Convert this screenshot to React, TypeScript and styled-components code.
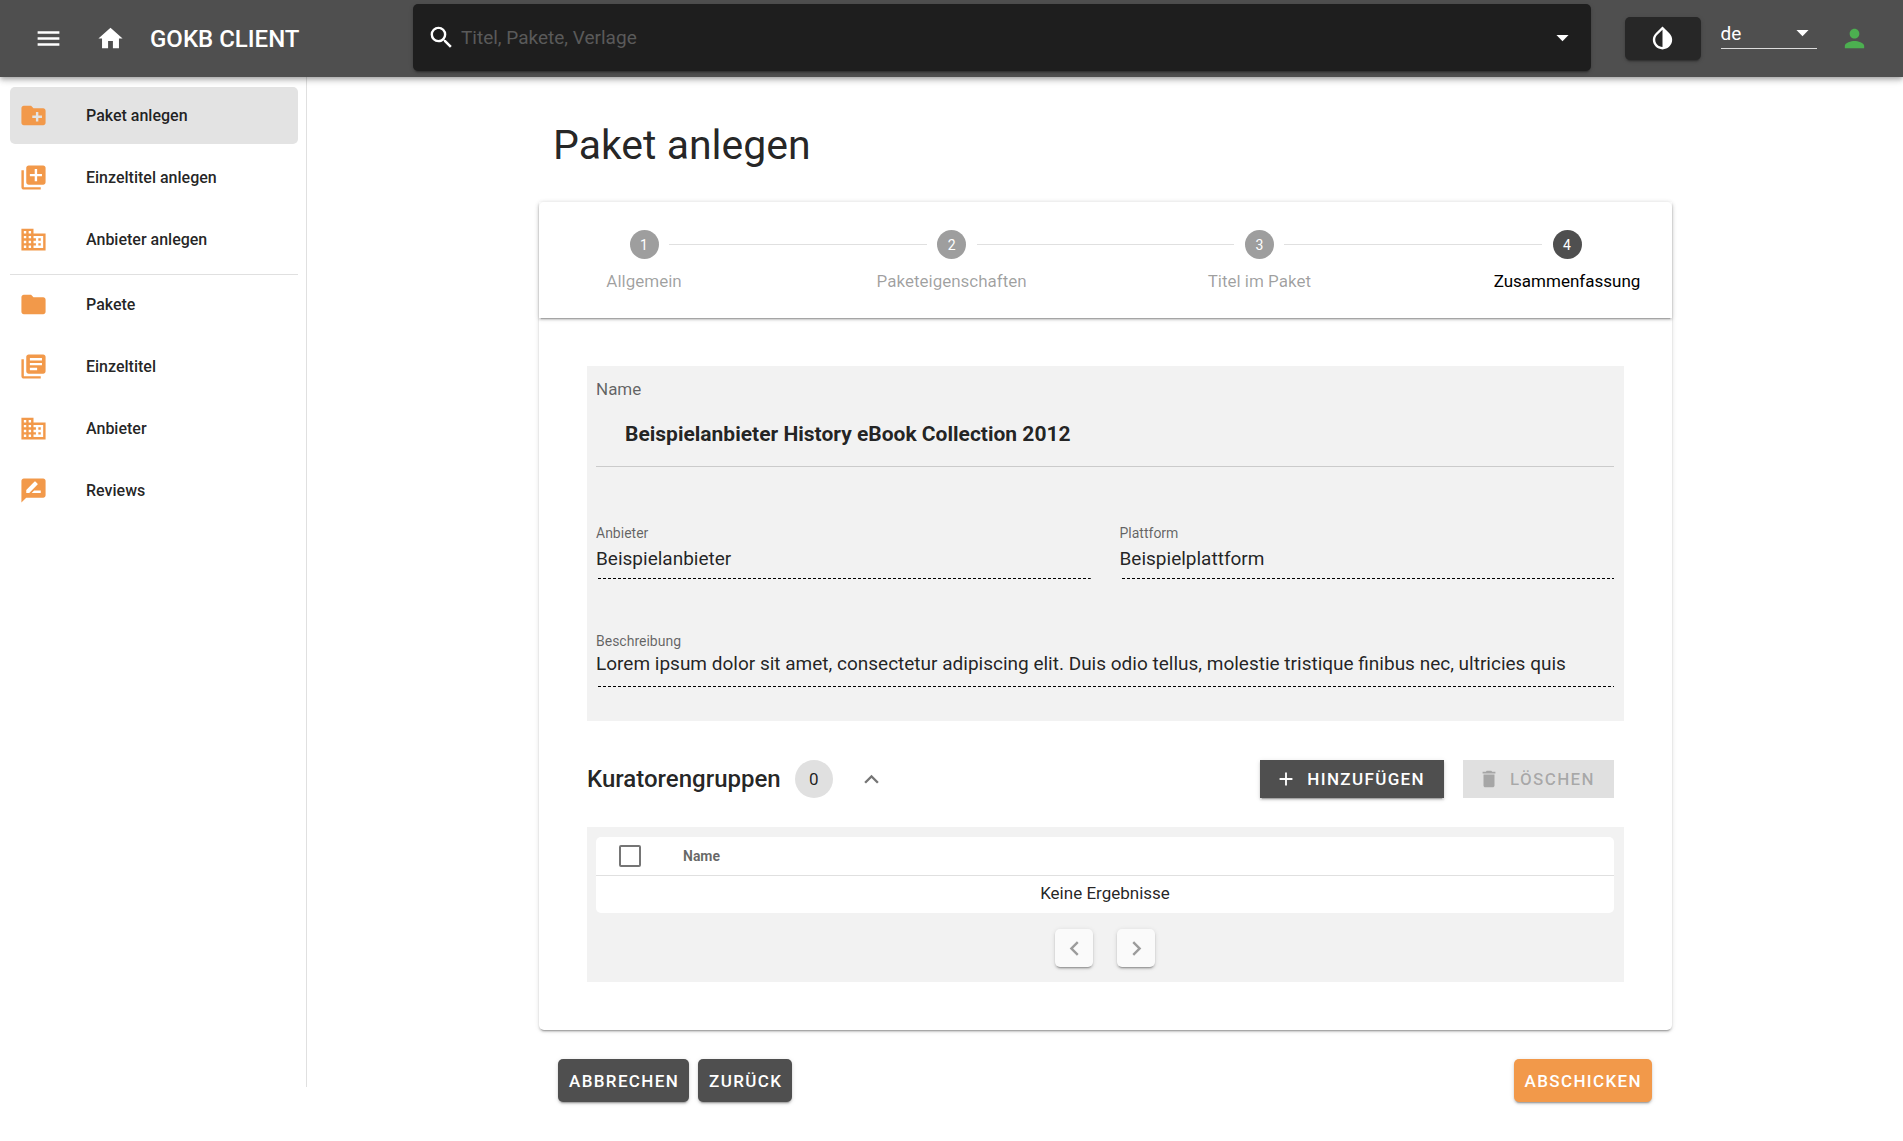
import React, { useState } from "react";
import styled, { createGlobalStyle, css } from "styled-components";
import {
  MdMenu,
  MdHome,
  MdSearch,
  MdArrowDropDown,
  MdInvertColors,
  MdPerson,
  MdCreateNewFolder,
  MdLibraryAdd,
  MdDomain,
  MdFolder,
  MdLibraryBooks,
  MdRateReview,
  MdAdd,
  MdDelete,
  MdKeyboardArrowUp,
  MdChevronLeft,
  MdChevronRight,
} from "react-icons/md";

const color = {
  dark: "#4f4f4f",
  accent: "#f2994a",
  text: "rgba(0, 0, 0, 0.87)",
  muted: "rgba(0, 0, 0, 0.6)",
  line: "rgba(0, 0, 0, 0.12)",
  panel: "#f2f2f2",
};

const raised =
  "0 3px 1px -2px rgba(0,0,0,.2), 0 2px 2px 0 rgba(0,0,0,.14), 0 1px 5px 0 rgba(0,0,0,.12)";

const GlobalStyle = createGlobalStyle`
  *, *::before, *::after { box-sizing: border-box; }
  body {
    margin: 0;
    background: #fff;
    color: ${color.text};
    font-family: Roboto, "Liberation Sans", sans-serif;
    font-size: 17px;
    line-height: 24px;
  }
  button, input, select, textarea { font: inherit; color: inherit; }
  button { cursor: pointer; }
  button:disabled { cursor: default; }
`;

const Page = styled.div`
  min-height: 100vh;
  display: flex;
  flex-direction: column;
`;

const TopBar = styled.header`
  height: 77px;
  flex: none;
  display: flex;
  align-items: center;
  background: ${color.dark};
  color: #fff;
  z-index: 1;
  box-shadow: 0 2px 4px -1px rgba(0,0,0,.2), 0 4px 5px 0 rgba(0,0,0,.14), 0 1px 10px 0 rgba(0,0,0,.12);
`;

const Brand = styled.div`
  width: 413px;
  flex: none;
  display: flex;
  align-items: center;
  padding-left: 34px;
`;

const BarButton = styled.button`
  display: flex;
  padding: 0;
  border: 0;
  background: none;
  color: ${(p) => p.color || "#fff"};
`;

const HomeLink = styled.a`
  display: flex;
  align-items: center;
  gap: 25px;
  margin-left: 33px;
  color: #fff;
  font-size: 24px;
  font-weight: 500;
  text-decoration: none;
`;

const Search = styled.div`
  flex: 1;
  height: 67px;
  margin-bottom: 3px;
  display: flex;
  align-items: center;
  padding: 0 14px;
  border-radius: 5px;
  background: #1e1e1e;
  box-shadow: ${raised};
`;

const SearchInput = styled.input`
  flex: 1;
  min-width: 0;
  margin-left: 5px;
  padding: 2px 0 0;
  border: 0;
  outline: 0;
  background: none;
  font-size: 19px;
  color: #fff;
  &::placeholder { color: #5a5a5a; opacity: 1; }
`;

const BarTools = styled.div`
  flex: none;
  width: 312px;
  display: flex;
  align-items: center;
  padding: 0 34px;
`;

const ContrastButton = styled.button`
  width: 76px;
  height: 43px;
  display: flex;
  align-items: center;
  justify-content: center;
  padding: 0;
  border: 0;
  border-radius: 5px;
  background: #272727;
  color: #fff;
  box-shadow: ${raised};
`;

const LanguageField = styled.div`
  width: 97px;
  height: 33px;
  margin: 0 23px 12px 20px;
  display: grid;
  align-items: center;
  border-bottom: 1px solid rgba(255, 255, 255, 0.8);
  svg { grid-area: 1 / 1; justify-self: end; pointer-events: none; }
`;

const LanguageSelect = styled.select`
  grid-area: 1 / 1;
  width: 100%;
  padding: 3px 0 0;
  border: 0;
  outline: 0;
  appearance: none;
  background: none;
  color: #fff;
  font-size: 19px;
  option { color: #000; }
`;

const Body = styled.div`
  flex: 1;
  display: flex;
`;

const Sidebar = styled.nav`
  width: 307px;
  flex: none;
  display: flex;
  flex-direction: column;
  margin-bottom: 54px;
  padding: 10px 8px 0 10px;
  border-right: 1px solid ${color.line};
`;

const NavLink = styled.a<{ $active?: boolean }>`
  height: 57px;
  display: flex;
  align-items: center;
  gap: 38px;
  margin-bottom: 5px;
  padding: 0 9px;
  border-radius: 5px;
  background: ${(p) => (p.$active ? "#e3e3e3" : "transparent")};
  color: ${color.text};
  font-size: 16px;
  font-weight: 500;
  text-decoration: none;
  svg { color: ${color.accent}; }
`;

const NavDivider = styled.hr`
  width: 100%;
  margin: 1px 0;
  border: 0;
  border-top: 1px solid ${color.line};
`;

const Main = styled.main`
  flex: 1;
  min-width: 0;
  padding: 29px 16px 30px;
`;

const Sheet = styled.div`
  border-radius: 5px;
  background: #fff;
`;

const Wizard = styled(Sheet)`
  max-width: 1170px;
  margin: 0 auto;
  padding: 15px 18px 8px 19px;
`;

const PageTitle = styled.h1`
  margin: 0 0 33px;
  padding-left: 14px;
  font-size: 41px;
  font-weight: 400;
  line-height: 48px;
`;

const StepperCard = styled.section`
  border-radius: 5px;
  background: #fff;
  box-shadow: ${raised};
`;

const StepList = styled.ol`
  height: 116px;
  margin: 0;
  padding: 0;
  display: flex;
  justify-content: space-between;
  list-style: none;
  box-shadow: ${raised};
`;

const Step = styled.li<{ $active?: boolean }>`
  width: 210px;
  flex: none;
  display: flex;
  flex-direction: column;
  align-items: center;
  gap: 10px;
  padding-top: 28px;
  color: ${(p) => (p.$active ? "#000" : "rgba(0, 0, 0, 0.38)")};
`;

const StepNumber = styled.span<{ $active?: boolean }>`
  width: 29px;
  height: 29px;
  display: flex;
  align-items: center;
  justify-content: center;
  border-radius: 50%;
  background: ${(p) => (p.$active ? color.dark : "#9e9e9e")};
  color: #fff;
  font-size: 14px;
`;

const StepLine = styled.li`
  flex: 1;
  height: 1px;
  margin: 42px -80px 0;
  background: ${color.line};
`;

const StepContent = styled.div`
  display: flex;
  flex-direction: column;
  gap: 1px;
  padding: 29px;
`;

const Section = styled(Sheet)`
  padding: 19px;
`;

const Panel = styled.div`
  padding: 10px 10px 15px 9px;
  background: ${color.panel};
`;

const NameField = styled.div`
  height: 91px;
  margin-bottom: 58px;
  border-bottom: 1px solid rgba(0, 0, 0, 0.16);
`;

const NameLabel = styled.label`
  display: block;
  padding-top: 1px;
  color: ${color.muted};
`;

const NameInput = styled.input`
  width: 100%;
  height: 40px;
  margin-top: 13px;
  padding: 0 29px;
  border: 0;
  outline: 0;
  background: none;
  font-size: 21px;
  font-weight: 700;
`;

const FieldRow = styled.div`
  display: grid;
  grid-template-columns: 1fr 1fr;
  gap: 29px;
  margin-bottom: 54px;
`;

const Field = styled.div`
  display: flex;
  flex-direction: column;
`;

const FieldLabel = styled.label`
  color: ${color.muted};
  font-size: 14px;
  line-height: 16px;
`;

const dashedField = css`
  width: 100%;
  height: 38px;
  border: 0;
  outline: 0;
  background: repeating-linear-gradient(90deg, transparent 0 2px, #000 2px 5px) bottom / 100% 1px no-repeat;
  font-size: 19px;
`;

const FieldInput = styled.input`
  ${dashedField}
  padding: 0 0 4px;
`;

const FieldArea = styled.textarea`
  ${dashedField}
  display: block;
  margin-bottom: 19px;
  padding: 3px 0 0;
  line-height: 24px;
  resize: none;
  overflow: hidden;
`;

const SectionHead = styled.div`
  display: flex;
  align-items: center;
  padding-right: 10px;
  margin-bottom: 29px;
`;

const SectionTitle = styled.h2`
  margin: 0;
  font-size: 24px;
  font-weight: 500;
`;

const Count = styled.span`
  width: 38px;
  height: 38px;
  display: flex;
  align-items: center;
  justify-content: center;
  margin: 0 24px 0 14px;
  border-radius: 50%;
  background: #e0e0e0;
`;

const PlainButton = styled.button`
  display: flex;
  padding: 0;
  border: 0;
  background: none;
  color: rgba(0, 0, 0, 0.54);
`;

const Spacer = styled.div`
  flex: 1;
`;

const Button = styled.button<{ $tone?: "accent"; $flat?: boolean }>`
  height: ${(p) => (p.$flat ? 38 : 43)}px;
  display: flex;
  align-items: center;
  gap: 10px;
  padding: ${(p) => (p.$flat ? "0 19px 0 15px" : "0 10px 0 11px")};
  border: 0;
  border-radius: ${(p) => (p.$flat ? 0 : 5)}px;
  background: ${(p) => (p.$tone === "accent" ? color.accent : color.dark)};
  color: #fff;
  font-size: 17px;
  font-weight: 500;
  letter-spacing: 0.08em;
  text-transform: uppercase;
  box-shadow: ${raised};
  &:disabled {
    background: #e0e0e0;
    color: rgba(0, 0, 0, 0.26);
    box-shadow: none;
  }
`;

const ButtonPair = styled.div<{ $gap: number }>`
  display: flex;
  gap: ${(p) => p.$gap}px;
`;

const Table = styled.table`
  width: 100%;
  border-collapse: collapse;
  border-radius: 5px;
  background: #fff;
`;

const HeadCell = styled.th`
  height: 38px;
  padding: 0 0 0 19px;
  border-bottom: 1px solid ${color.line};
  color: ${color.muted};
  font-size: 14px;
  font-weight: 700;
  text-align: left;
`;

const CheckCell = styled(HeadCell)`
  width: 68px;
  padding: 0 0 0 23px;
`;

const CheckBox = styled.input`
  display: block;
  width: 22px;
  height: 22px;
  margin: 0;
  appearance: none;
  border: 2px solid #757575;
  border-radius: 2px;
  &:checked { background: ${color.dark}; }
`;

const EmptyCell = styled.td`
  height: 38px;
  padding: 0 0 3px;
  text-align: center;
`;

const Pager = styled.div`
  display: flex;
  justify-content: center;
  gap: 24px;
  padding-top: 16px;
`;

const PagerButton = styled.button`
  width: 38px;
  height: 38px;
  display: flex;
  align-items: center;
  justify-content: center;
  padding: 0;
  border: 0;
  border-radius: 5px;
  background: #fafafa;
  color: rgba(0, 0, 0, 0.38);
  box-shadow: ${raised};
`;

const Actions = styled.div`
  display: flex;
  justify-content: space-between;
  padding: 29px 20px 0 19px;
`;

const createLinks = [
  { label: "Paket anlegen", Icon: MdCreateNewFolder, active: true },
  { label: "Einzeltitel anlegen", Icon: MdLibraryAdd },
  { label: "Anbieter anlegen", Icon: MdDomain },
];

const browseLinks = [
  { label: "Pakete", Icon: MdFolder },
  { label: "Einzeltitel", Icon: MdLibraryBooks },
  { label: "Anbieter", Icon: MdDomain },
  { label: "Reviews", Icon: MdRateReview },
];

const steps = ["Allgemein", "Paketeigenschaften", "Titel im Paket", "Zusammenfassung"];

type LinkItem = { label: string; Icon: React.ComponentType<{ size?: number }>; active?: boolean };

function NavItems({ items }: { items: LinkItem[] }) {
  return (
    <>
      {items.map(({ label, Icon, active }) => (
        <NavLink key={label} href="#" $active={active}>
          <Icon size={29} />
          {label}
        </NavLink>
      ))}
    </>
  );
}

function TextField({ id, label, value }: { id: string; label: string; value: string }) {
  return (
    <Field>
      <FieldLabel htmlFor={id}>{label}</FieldLabel>
      <FieldInput id={id} defaultValue={value} readOnly />
    </Field>
  );
}

export default function App() {
  const [open, setOpen] = useState(true);
  const current = steps.length - 1;

  return (
    <Page>
      <GlobalStyle />
      <TopBar>
        <Brand>
          <BarButton aria-label="Menü">
            <MdMenu size={29} />
          </BarButton>
          <HomeLink href="#">
            <MdHome size={29} />
            GOKB CLIENT
          </HomeLink>
        </Brand>
        <Search>
          <MdSearch size={29} />
          <SearchInput aria-label="Suche" placeholder="Titel, Pakete, Verlage" />
          <MdArrowDropDown size={29} />
        </Search>
        <BarTools>
          <ContrastButton aria-label="Farbschema">
            <MdInvertColors size={29} />
          </ContrastButton>
          <LanguageField>
            <LanguageSelect aria-label="Sprache" defaultValue="de">
              <option value="de">de</option>
              <option value="en">en</option>
            </LanguageSelect>
            <MdArrowDropDown size={29} />
          </LanguageField>
          <BarButton color="#4caf50" aria-label="Benutzer">
            <MdPerson size={29} />
          </BarButton>
        </BarTools>
      </TopBar>

      <Body>
        <Sidebar>
          <NavItems items={createLinks} />
          <NavDivider />
          <NavItems items={browseLinks} />
        </Sidebar>

        <Main>
          <Wizard>
            <PageTitle>Paket anlegen</PageTitle>
            <StepperCard>
              <StepList>
                {steps.map((label, i) => (
                  <React.Fragment key={label}>
                    {i > 0 && <StepLine aria-hidden="true" />}
                    <Step $active={i === current}>
                      <StepNumber $active={i === current}>{i + 1}</StepNumber>
                      {label}
                    </Step>
                  </React.Fragment>
                ))}
              </StepList>

              <StepContent>
                <Section>
                  <Panel>
                    <NameField>
                      <NameLabel htmlFor="name">Name</NameLabel>
                      <NameInput
                        id="name"
                        defaultValue="Beispielanbieter History eBook Collection 2012"
                        readOnly
                      />
                    </NameField>
                    <FieldRow>
                      <TextField id="provider" label="Anbieter" value="Beispielanbieter" />
                      <TextField id="platform" label="Plattform" value="Beispielplattform" />
                    </FieldRow>
                    <Field>
                      <FieldLabel htmlFor="description">Beschreibung</FieldLabel>
                      <FieldArea
                        id="description"
                        rows={1}
                        readOnly
                        defaultValue="Lorem ipsum dolor sit amet, consectetur adipiscing elit. Duis odio tellus, molestie tristique finibus nec, ultricies quis"
                      />
                    </Field>
                  </Panel>
                </Section>

                <Section>
                  <SectionHead>
                    <SectionTitle>Kuratorengruppen</SectionTitle>
                    <Count>0</Count>
                    <PlainButton aria-label="Bereich umschalten" onClick={() => setOpen(!open)}>
                      <MdKeyboardArrowUp size={29} />
                    </PlainButton>
                    <Spacer />
                    <ButtonPair $gap={19}>
                      <Button $flat>
                        <MdAdd size={22} />
                        Hinzufügen
                      </Button>
                      <Button $flat disabled>
                        <MdDelete size={22} />
                        Löschen
                      </Button>
                    </ButtonPair>
                  </SectionHead>
                  {open && (
                    <Panel>
                      <Table>
                        <thead>
                          <tr>
                            <CheckCell>
                              <CheckBox type="checkbox" aria-label="Alle auswählen" />
                            </CheckCell>
                            <HeadCell>Name</HeadCell>
                          </tr>
                        </thead>
                        <tbody>
                          <tr>
                            <EmptyCell colSpan={2}>Keine Ergebnisse</EmptyCell>
                          </tr>
                        </tbody>
                      </Table>
                      <Pager>
                        <PagerButton aria-label="Vorherige Seite">
                          <MdChevronLeft size={29} />
                        </PagerButton>
                        <PagerButton aria-label="Nächste Seite">
                          <MdChevronRight size={29} />
                        </PagerButton>
                      </Pager>
                    </Panel>
                  )}
                </Section>
              </StepContent>
            </StepperCard>

            <Actions>
              <ButtonPair $gap={9}>
                <Button>Abbrechen</Button>
                <Button>Zurück</Button>
              </ButtonPair>
              <Button $tone="accent">Abschicken</Button>
            </Actions>
          </Wizard>
        </Main>
      </Body>
    </Page>
  );
}
